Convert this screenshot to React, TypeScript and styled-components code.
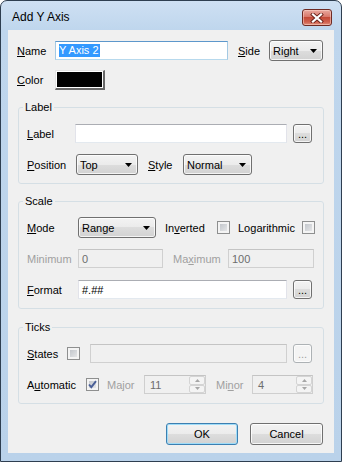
import styled, { createGlobalStyle } from "styled-components";

const Global = createGlobalStyle`
  html, body { margin: 0; padding: 0; background: #ffffff; }
  body { font-family: "Liberation Sans", Arial, sans-serif; font-size: 11px; color: #000; }
  * { box-sizing: border-box; }
`;

const Window = styled.div`
  width: 342px;
  height: 462px;
  display: flex;
  flex-direction: column;
  border: 1px solid #2e3e50;
  border-radius: 7px 7px 0 0;
  background: linear-gradient(to bottom, #cee0f3 0px, #bfd6ed 29px, #bad2ea 100%);
  overflow: hidden;
`;

const TitleBar = styled.div`
  height: 29px;
  flex: none;
  display: flex;
  align-items: flex-start;
  justify-content: space-between;
  padding: 8px 9px 0 11px;
`;

const Title = styled.div`
  font-size: 12px;
  line-height: 15px;
  padding-top: 1px;
  color: #000;
`;

const CloseButton = styled.div`
  width: 30px;
  height: 17px;
  border: 1px solid #6e2a23;
  border-radius: 3px;
  background: linear-gradient(to bottom, #e9a99f 0%, #d9786b 45%, #c44a38 50%, #d0614f 80%, #e0907c 100%);
  box-shadow: inset 0 0 0 1px rgba(255, 220, 210, 0.5);
  display: flex;
  align-items: center;
  justify-content: center;
`;

const Body = styled.div`
  flex: 1;
  margin: 0 7px 8px 7px;
  background: #f0f0f0;
  padding: 10px 10px 0 9px;
  display: flex;
  flex-direction: column;
`;

const Row = styled.div<{ $mt?: number }>`
  display: flex;
  align-items: center;
  height: 21px;
  flex: none;
  margin-top: ${(p) => p.$mt ?? 0}px;
`;

const Caption = styled.span<{ $w: number; $ml?: number; $disabled?: boolean }>`
  flex: none;
  width: ${(p) => p.$w}px;
  margin-left: ${(p) => p.$ml ?? 0}px;
  white-space: nowrap;
  line-height: 14px;
  color: ${(p) => (p.$disabled ? "#a0a0a0" : "#000")};
`;

const TextBox = styled.div<{ $w: number; $ml?: number; $focus?: boolean; $disabled?: boolean }>`
  flex: none;
  width: ${(p) => p.$w}px;
  height: 19px;
  margin-left: ${(p) => p.$ml ?? 0}px;
  display: flex;
  align-items: center;
  padding: 0 3px;
  white-space: nowrap;
  background: ${(p) => (p.$disabled ? "#f0f0f0" : "#ffffff")};
  color: ${(p) => (p.$disabled ? "#6d6d6d" : "#000")};
  border: 1px solid;
  border-color: ${(p) =>
    p.$focus
      ? "#5d97cb #a4c9e3 #b7d9ed #a4c9e3"
      : p.$disabled
      ? "#c4c4c4 #d0d0d0 #d0d0d0 #d0d0d0"
      : "#abadb3 #e2e3ea #e3e9ef #e2e3ea"};
`;

const Selected = styled.span`
  background: #3399ff;
  color: #ffffff;
  line-height: 13px;
  padding: 0 1px 0 0;
`;

const Combo = styled.div<{ $w: number }>`
  flex: none;
  width: ${(p) => p.$w}px;
  height: 21px;
  display: flex;
  align-items: center;
  justify-content: space-between;
  padding: 0 5px 0 3px;
  border: 1px solid #707070;
  border-radius: 3px;
  background: linear-gradient(to bottom, #f3f3f3 0%, #ebebeb 50%, #dddddd 50%, #d2d2d2 100%);
  box-shadow: inset 0 0 0 1px rgba(255, 255, 255, 0.75);
`;

const Ellipsis = styled.div<{ $disabled?: boolean }>`
  flex: none;
  width: 19px;
  height: 19px;
  margin-left: 6px;
  border: 1px solid ${(p) => (p.$disabled ? "#adb2b5" : "#707070")};
  border-radius: 3px;
  background: ${(p) =>
    p.$disabled
      ? "#f4f4f4"
      : "linear-gradient(to bottom, #f3f3f3 0%, #ebebeb 50%, #dddddd 50%, #d2d2d2 100%)"};
  box-shadow: inset 0 0 0 1px rgba(255, 255, 255, 0.75);
  color: ${(p) => (p.$disabled ? "#a0a0a0" : "#000")};
  display: flex;
  align-items: center;
  justify-content: center;
  line-height: 17px;
  padding-top: 1px;
`;

const Check = styled.span<{ $ml?: number }>`
  flex: none;
  width: 13px;
  height: 13px;
  margin-left: ${(p) => p.$ml ?? 0}px;
  border: 1px solid #8e8f8f;
  background: linear-gradient(135deg, #b9bec4 0%, #eeeeef 100%);
  box-shadow: inset 0 0 0 2px #f4f4f4;
  display: flex;
  align-items: center;
  justify-content: center;
`;

const Spin = styled.div<{ $w: number }>`
  flex: none;
  width: ${(p) => p.$w}px;
  height: 19px;
  display: flex;
  border: 1px solid #cfcfcf;
  border-top-color: #c4c4c4;
  background: #f0f0f0;
  color: #6d6d6d;
  padding-left: 5px;
`;

const SpinValue = styled.span`
  flex: 1;
  align-self: center;
`;

const SpinButtons = styled.div`
  width: 16px;
  flex: none;
  display: flex;
  flex-direction: column;
`;

const SpinBtn = styled.div`
  flex: 1;
  border: 1px solid #d4d4d4;
  border-radius: 2px;
  background: #f4f4f4;
  display: flex;
  align-items: center;
  justify-content: center;
`;

const Group = styled.fieldset<{ $mt: number }>`
  margin: ${(p) => p.$mt}px 0 0 1px;
  padding: 9px 9px 8px 8px;
  border: 1px solid #d5dfe5;
  border-radius: 3px;
  min-width: 0;
  flex: none;
`;

const Legend = styled.legend`
  padding: 0 2px;
  margin-left: -4px;
  line-height: 14px;
  font-size: 11px;
  color: #000;
`;

const GroupRows = styled.div`
  display: flex;
  flex-direction: column;
  gap: 10px;
`;

const ColorButton = styled.div`
  flex: none;
  width: 50px;
  height: 20px;
  border-style: solid;
  border-width: 1px 2px 2px 1px;
  border-color: #e3e3e3 #696969 #696969 #e3e3e3;
  background: #ffffff;
  padding: 1px;
`;

const Swatch = styled.div`
  width: 100%;
  height: 100%;
  background: #000000;
`;

const ButtonRow = styled.div`
  display: flex;
  justify-content: flex-end;
  gap: 12px;
  margin-top: 19px;
  padding-right: 1px;
`;

const PushButton = styled.div<{ $w: number; $default?: boolean }>`
  width: ${(p) => p.$w}px;
  height: 22px;
  border: 1px solid ${(p) => (p.$default ? "#3c7fb1" : "#707070")};
  border-radius: 3px;
  background: linear-gradient(to bottom, #f3f3f3 0%, #ebebeb 50%, #dddddd 50%, #d2d2d2 100%);
  box-shadow: inset 0 0 0 1px ${(p) => (p.$default ? "#9fdcf8" : "rgba(255,255,255,0.8)")};
  display: flex;
  align-items: center;
  justify-content: center;
`;

const DownArrow = () => (
  <svg width="7" height="4" viewBox="0 0 7 4">
    <path d="M0 0H7L3.5 4Z" fill="#000" />
  </svg>
);

const SmallArrow = ({ up }: { up?: boolean }) => (
  <svg width="5" height="3" viewBox="0 0 5 3">
    <path d={up ? "M0 3H5L2.5 0Z" : "M0 0H5L2.5 3Z"} fill="#a6a6a6" />
  </svg>
);

const CheckMark = () => (
  <svg width="9" height="9" viewBox="0 0 9 9">
    <path d="M1 4.5L3.3 7.2L8 1.2" fill="none" stroke="#4a5f97" strokeWidth="1.9" />
  </svg>
);

function SpinBox({ w, value }: { w: number; value: string }) {
  return (
    <Spin $w={w}>
      <SpinValue>{value}</SpinValue>
      <SpinButtons>
        <SpinBtn>
          <SmallArrow up />
        </SpinBtn>
        <SpinBtn>
          <SmallArrow />
        </SpinBtn>
      </SpinButtons>
    </Spin>
  );
}

export default function App() {
  return (
    <>
      <Global />
      <Window>
        <TitleBar>
          <Title>Add Y Axis</Title>
          <CloseButton>
            <svg width="14" height="10" viewBox="0 0 14 10">
              <path d="M3 1.5L11 8.5M11 1.5L3 8.5" stroke="#6b231b" strokeWidth="4" strokeLinecap="square" />
              <path d="M3 1.5L11 8.5M11 1.5L3 8.5" stroke="#ffffff" strokeWidth="2.2" strokeLinecap="square" />
            </svg>
          </CloseButton>
        </TitleBar>

        <Body>
          <Row>
            <Caption $w={38}>
              <u>N</u>ame
            </Caption>
            <TextBox $w={173} $focus>
              <Selected>Y Axis 2</Selected>
            </TextBox>
            <Caption $w={31} $ml={10}>
              <u>S</u>ide
            </Caption>
            <Combo $w={54}>
              Right
              <DownArrow />
            </Combo>
          </Row>

          <Row $mt={8}>
            <Caption $w={38}>
              <u>C</u>olor
            </Caption>
            <ColorButton>
              <Swatch />
            </ColorButton>
          </Row>

          <Group $mt={10}>
            <Legend>Label</Legend>
            <GroupRows>
              <Row>
                <Caption $w={48}>
                  <u>L</u>abel
                </Caption>
                <TextBox $w={212} />
                <Ellipsis>...</Ellipsis>
              </Row>
              <Row>
                <Caption $w={49}>
                  <u>P</u>osition
                </Caption>
                <Combo $w={62}>
                  Top
                  <DownArrow />
                </Combo>
                <Caption $w={35} $ml={10}>
                  <u>S</u>tyle
                </Caption>
                <Combo $w={69}>
                  Normal
                  <DownArrow />
                </Combo>
              </Row>
            </GroupRows>
          </Group>

          <Group $mt={10}>
            <Legend>Scale</Legend>
            <GroupRows>
              <Row>
                <Caption $w={51}>
                  <u>M</u>ode
                </Caption>
                <Combo $w={78}>
                  Range
                  <DownArrow />
                </Combo>
                <Caption $w={52} $ml={9}>
                  In<u>v</u>erted
                </Caption>
                <Check />
                <Caption $w={64} $ml={8}>
                  Lo<u>g</u>arithmic
                </Caption>
                <Check />
              </Row>
              <Row>
                <Caption $w={51} $disabled>
                  Minimum
                </Caption>
                <TextBox $w={85} $disabled>
                  0
                </TextBox>
                <Caption $w={55} $ml={10} $disabled>
                  Ma<u>x</u>imum
                </Caption>
                <TextBox $w={86} $disabled>
                  100
                </TextBox>
              </Row>
              <Row>
                <Caption $w={51}>
                  <u>F</u>ormat
                </Caption>
                <TextBox $w={209}>#.##</TextBox>
                <Ellipsis>...</Ellipsis>
              </Row>
            </GroupRows>
          </Group>

          <Group $mt={11}>
            <Legend>Ticks</Legend>
            <GroupRows>
              <Row>
                <Caption $w={40}>
                  <u>S</u>tates
                </Caption>
                <Check />
                <TextBox $w={197} $ml={10} $disabled />
                <Ellipsis $disabled>...</Ellipsis>
              </Row>
              <Row>
                <Caption $w={59}>
                  A<u>u</u>tomatic
                </Caption>
                <Check>
                  <CheckMark />
                </Check>
                <Caption $w={37} $ml={8} $disabled>
                  Ma<u>j</u>or
                </Caption>
                <SpinBox w={62} value="11" />
                <Caption $w={36} $ml={10} $disabled>
                  Mi<u>n</u>or
                </Caption>
                <SpinBox w={61} value="4" />
              </Row>
            </GroupRows>
          </Group>

          <ButtonRow>
            <PushButton $w={72} $default>
              OK
            </PushButton>
            <PushButton $w={73}>Cancel</PushButton>
          </ButtonRow>
        </Body>
      </Window>
    </>
  );
}
